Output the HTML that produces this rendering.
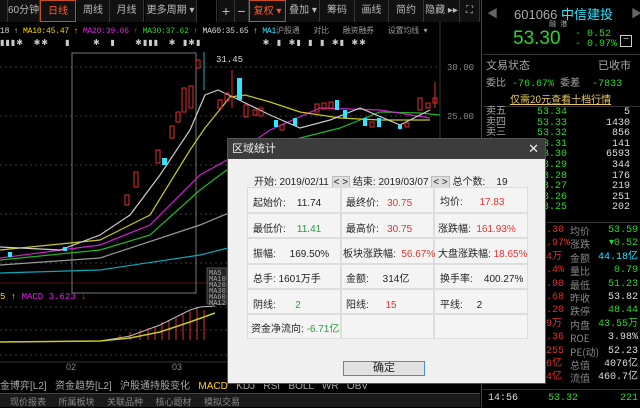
<!DOCTYPE html>
<html><head><meta charset="utf-8"><style>
*{margin:0;padding:0;box-sizing:border-box}
body{width:640px;height:407px;background:#000;overflow:hidden;position:relative;font-family:"Liberation Sans","Noto Sans CJK SC",sans-serif;font-size:11px;color:#ccc}
.a{position:absolute;white-space:nowrap}
.tb{position:absolute;top:0;height:22px;border-right:1px solid #333;background:#111;color:#bbb;font-size:10px;line-height:22px;text-align:center;overflow:hidden;white-space:nowrap}
.rp .a{font-family:"Liberation Mono","Noto Sans CJK SC",monospace;font-size:11px}
.g{color:#2fd52f}.r{color:#ff3b3b}.w{color:#ddd}.y{color:#ffd700}.c{color:#2ee6ff}
.dlg{position:absolute;left:227px;top:138px;width:319px;height:246px;background:#f0f0f0;border:1px solid #555}
.dt{height:20px;background:#3c3c3c;color:#eee;font-size:11px;line-height:20px;padding-left:4px;position:relative}
.dlg .a{color:#222;font-size:10px}
.cell{position:absolute;border:1px solid #ddd;background:#f4f4f4}
.rd{color:#e03535!important}.gn{color:#2a9a3a!important}
.btn{position:absolute;background:#e1e1e1;border:1px solid #9ab;font-size:11px;color:#222;text-align:center}
</style></head><body>
<div class="tb" style="left:0;width:8px"></div>
<div class="tb" style="left:8px;width:32px">60分钟</div>
<div class="tb" style="left:40px;width:36px;color:#ff5a2a;border:1px solid #c8501e">日线</div>
<div class="tb" style="left:77px;width:33px">周线</div>
<div class="tb" style="left:110px;width:34px">月线</div>
<div class="tb" style="left:145px;width:52px">更多周期 ▾</div>
<div class="tb" style="left:197px;width:20px;background:#000"></div>
<div class="tb" style="left:218px;width:17px;font-size:14px">+</div>
<div class="tb" style="left:235px;width:14px;font-size:14px">−</div>
<div class="tb" style="left:249px;width:37px;color:#ff5a2a;border:1px solid #c8501e">复权 ▾</div>
<div class="tb" style="left:287px;width:33px">叠加 ▾</div>
<div class="tb" style="left:320px;width:35px">筹码</div>
<div class="tb" style="left:355px;width:34px">画线</div>
<div class="tb" style="left:389px;width:35px">简约</div>
<div class="tb" style="left:424px;width:36px">隐藏 ▸▸</div>
<div class="tb" style="left:460px;width:20px">⛶</div>
<div class="a" style="left:0;top:25px;font-size:8px;font-family:'Liberation Mono','Noto Sans CJK SC',monospace;letter-spacing:-0.2px">
<span class="w">18 ↑</span> <span class="y">MA10:45.47 ↑</span> <span style="color:#e020e0">MA20:39.06 ↑</span> <span class="g">MA30:37.62 ↑</span> <span class="w">MA60:35.65 ↑</span> <span class="c">MA1</span><span style="color:#999">沪股通 &nbsp; 对比 &nbsp; 融资融券 &nbsp; 设置均线 ▾</span></div>
<div class="a" style="left:0;top:38px;font-size:8px;color:#ccc;letter-spacing:1px">▮▮▮✱ &nbsp; ✱✱ &nbsp; &nbsp; ▮ &nbsp; &nbsp; &nbsp; ✱ &nbsp; ▮ &nbsp; &nbsp; &nbsp;✱▮▮▮ &nbsp; ✱ &nbsp;▮✱▮ &nbsp; &nbsp; &nbsp; &nbsp; &nbsp; &nbsp; &nbsp; &nbsp; &nbsp; ✱ &nbsp;▮ &nbsp;✱▮ &nbsp;▮ &nbsp;▮ &nbsp;✱▮ &nbsp;✱✱</div>
<svg class="a" style="left:0;top:0" width="480" height="407">
<g stroke="#3a3a3a" stroke-dasharray="2,3">
<line x1="0" y1="67" x2="440" y2="67"/><line x1="0" y1="116" x2="440" y2="116"/><line x1="0" y1="165" x2="440" y2="165"/><line x1="0" y1="214" x2="440" y2="214"/><line x1="0" y1="263" x2="440" y2="263"/>
<line x1="0" y1="307" x2="440" y2="307"/><line x1="0" y1="330" x2="440" y2="330"/><line x1="0" y1="355" x2="440" y2="355"/></g>
<line x1="440" y1="22" x2="440" y2="372" stroke="#333"/>
<line x1="0" y1="283" x2="480" y2="283" stroke="#5a1010"/>
<line x1="0" y1="362" x2="480" y2="362" stroke="#333"/>
<rect x="72" y="53" width="124" height="240" fill="none" stroke="#777"/>
<text x="447" y="70" fill="#888" font-size="9" font-family="Liberation Mono">30.00</text>
<text x="447" y="119" fill="#888" font-size="9" font-family="Liberation Mono">25.00</text>
<text x="216" y="62" fill="#ddd" font-size="9" font-family="Liberation Mono">31.45</text>
<text x="66" y="370" fill="#888" font-size="9">02</text><text x="172" y="370" fill="#888" font-size="9">03</text>
<g fill="none" stroke-width="1.2">
<polyline stroke="#0aa8b8" points="0,273 100,270 200,255 300,230 440,205"/>
<polyline stroke="#999" points="0,265 100,258 200,225 260,200 330,170 440,150"/>
<polyline stroke="#22b822" points="0,260 100,250 150,235 200,190 240,160 300,138 340,128 380,112 420,113 440,115"/>
<polyline stroke="#d020d0" points="0,258 100,245 150,225 200,175 227,160 270,130 320,108 380,110 430,118"/>
<polyline stroke="#c8c820" points="0,250 100,240 150,215 190,150 205,128 230,97 245,95 270,102 300,112 340,118 380,120 430,120"/>
<polyline stroke="#ccc" points="0,247 60,250 100,235 130,215 160,175 190,130 205,95 218,90 235,98 270,115 300,128 330,120 360,108 400,125 430,110"/>
</g>
<g stroke="#e03030" fill="none">
<rect x="125" y="195" width="4" height="10"/><rect x="134" y="172" width="4" height="15"/><rect x="156" y="150" width="4" height="13"/><rect x="170" y="126" width="4" height="12"/><rect x="176" y="112" width="4" height="10"/><rect x="182" y="88" width="4" height="24"/><rect x="189" y="86" width="4" height="22"/><rect x="196" y="60" width="4" height="8"/>
<rect x="218" y="100" width="4" height="8"/><rect x="225" y="93" width="4" height="8"/><rect x="244" y="105" width="4" height="12"/><rect x="253" y="110" width="4" height="5"/><rect x="259" y="108" width="4" height="8"/><rect x="280" y="125" width="4" height="5"/><rect x="315" y="104" width="4" height="8"/><rect x="322" y="103" width="4" height="6"/><rect x="329" y="102" width="4" height="6"/><rect x="370" y="122" width="4" height="5"/><rect x="405" y="123" width="4" height="4"/><rect x="418" y="98" width="4" height="12"/><rect x="426" y="103" width="4" height="5"/><rect x="433" y="98" width="4" height="5"/>
<line x1="232" y1="70" x2="232" y2="108"/><line x1="435" y1="82" x2="435" y2="108"/></g>
<g fill="#2ee6ff"><rect x="237" y="78" width="5" height="22"/><rect x="162" y="158" width="5" height="7"/><rect x="274" y="120" width="4" height="7"/><rect x="293" y="118" width="4" height="8"/><rect x="335" y="100" width="4" height="10"/><rect x="343" y="110" width="4" height="8"/><rect x="363" y="118" width="4" height="8"/><rect x="377" y="118" width="4" height="9"/><rect x="398" y="125" width="4" height="4"/><rect x="8" y="252" width="4" height="5"/><rect x="63" y="247" width="4" height="4"/></g>
<line x1="204" y1="52" x2="204" y2="90" stroke="#2ab"/>
<g stroke="#e03030"><line x1="120" y1="335" x2="120" y2="340"/><line x1="130" y1="332" x2="130" y2="340"/><line x1="140" y1="330" x2="140" y2="340"/><line x1="148" y1="328" x2="148" y2="340"/><line x1="155" y1="326" x2="155" y2="340"/><line x1="162" y1="322" x2="162" y2="340"/><line x1="169" y1="320" x2="169" y2="340"/><line x1="176" y1="318" x2="176" y2="340"/><line x1="183" y1="314" x2="183" y2="340"/><line x1="190" y1="311" x2="190" y2="340"/><line x1="197" y1="307" x2="197" y2="340"/><line x1="204" y1="310" x2="204" y2="340"/></g>
<polyline fill="none" stroke="#bbb" points="0,342 100,341 130,336 160,325 190,310 200,307 215,306"/>
<polyline fill="none" stroke="#c8c820" stroke-width="1.5" points="0,342 100,341 130,338 160,332 190,322 215,313"/>
<rect x="207" y="268" width="20" height="36" fill="#222" stroke="#555"/>
</svg>
<div class="a" style="left:209px;top:271px;font-size:7px;color:#aaa;line-height:6px;font-family:'Liberation Mono'">MA5<br>MA10<br>MA20<br>MA30<br>MA60<br>MA12</div>
<div class="a" style="left:0;top:292px;font-size:9px;font-family:'Liberation Mono'"><span class="y">5 ↑</span> <span style="color:#e020e0">MACD 3.623 ↓</span></div>
<div class="a" style="left:0;top:377px;font-size:10px;color:#aaa">金博弈[L2] &nbsp; 资金趋势[L2] &nbsp; 沪股通持股变化 &nbsp; <span class="y">MACD</span> &nbsp; KDJ &nbsp; RSI &nbsp; BOLL &nbsp; WR &nbsp; OBV</div>
<div class="a" style="left:0;top:393px;width:480px;height:14px;background:#1a1a1a;border-top:1px solid #444"></div>
<div class="a" style="left:10px;top:395px;font-size:9px;color:#888">现价报表 &nbsp; &nbsp; 所属板块 &nbsp; &nbsp; 关联品种 &nbsp; &nbsp; 核心题材 &nbsp; &nbsp; 模拟交易</div>
<div class="rp">
<div class="a" style="left:481px;top:0;width:1px;height:407px;background:#444"></div>
<div class="a" style="left:487px;top:5px;color:#666">◀</div><div class="a" style="left:631px;top:5px;color:#666">▶</div>
<div class="a" style="left:514px;top:4px;font-size:13px;color:#aaa;font-family:'Liberation Sans','Noto Sans CJK SC',sans-serif">601066 <span class="c">中信建投</span></div>
<div class="a" style="left:549px;top:19px;font-size:7px;color:#aaa">融 港</div>
<div class="a" style="left:513px;top:28px;font-size:19px;font-family:'Liberation Sans'" ><span class="g">53.30</span></div>
<div class="a g" style="left:575px;top:30px;line-height:10px;font-size:10px">- 0.52<br>- 0.97%</div>
<div class="a" style="left:620px;top:35px;width:12px;height:12px;border:1px solid #ccc;color:#ccc;font-size:10px;line-height:9px;text-align:center">−</div>
<div class="a" style="left:483px;top:54px;width:157px;height:1px;background:#333"></div>
<div class="a" style="left:486px;top:57px;color:#aaa;font-family:'Noto Sans CJK SC'">文易状态</div><div class="a" style="left:598px;top:57px;color:#aaa;font-family:'Noto Sans CJK SC'">已收市</div>
<div class="a" style="left:486px;top:74px;color:#aaa;font-size:10px"><span style="font-family:'Noto Sans CJK SC'">委比</span> <span class="g">-76.67%</span> <span style="font-family:'Noto Sans CJK SC'">委差</span> &nbsp;<span class="g">-7833</span></div>
<div class="a" style="left:510px;top:91px;color:#e8c860;text-decoration:underline;font-family:'Noto Sans CJK SC';font-size:10px">仅需20元查看十档行情</div>
<div class="a" style="left:483px;top:106px;width:157px;height:1px;background:#333"></div>
<div class="a" style="left:486px;top:108px;color:#aaa;line-height:10.6px;font-size:10px">卖五<br>卖四<br>卖三<br>卖二<br>卖一<br>买一<br>买二<br>买三<br>买四<br>买五</div>
<div class="a g" style="left:537px;top:108px;line-height:10.6px;font-size:10px">53.34<br>53.33<br>53.32<br>53.31<br>53.30<br>53.29<br>53.28<br>53.27<br>53.26<br>53.25</div>
<div class="a w" style="left:590px;top:108px;line-height:10.6px;font-size:10px;text-align:right;width:40px">5<br>1430<br>856<br>141<br>6593<br>344<br>176<br>219<br>251<br>202</div>
<div class="a" style="left:483px;top:222px;width:157px;height:1px;background:#333"></div>
<div class="a" style="left:546px;top:224px;line-height:13.4px;font-size:10px;color:#e03030">.30<br>.97%<br>4万<br>.4%<br>.90<br>.68<br>.20<br>9万<br>.36<br>255<br>6亿<br>4亿</div>
<div class="a" style="left:570px;top:224px;line-height:13.4px;font-size:10px;color:#888;font-family:'Noto Sans CJK SC'">均价<br>涨跌<br>金额<br>量比<br>最低<br>昨收<br>跌停<br>内盘<br>ROE<br>PE(动)<br>总值<br>流值</div>
<div class="a" style="left:595px;top:224px;width:43px;text-align:right;line-height:13.4px;font-size:10px"><span class="g">53.59</span><br><span class="g">▾0.52</span><br><span class="c">44.18亿</span><br><span class="g">0.79</span><br><span class="g">51.23</span><br><span class="w">53.82</span><br><span class="g">48.44</span><br><span class="g">43.55万</span><br><span class="w">3.98%</span><br><span class="w">52.23</span><br><span class="w">4076亿</span><br><span class="w">460.7亿</span></div>
<div class="a" style="left:483px;top:389px;width:157px;height:1px;background:#333"></div>
<div class="a w" style="left:488px;top:393px;font-size:10px">14:56</div><div class="a g" style="left:548px;top:393px;font-size:10px">53.32</div><div class="a g" style="left:620px;top:393px;font-size:10px">221</div>
</div>
<div class="dlg">
<div class="dt">区域统计<span style="position:absolute;right:6px;top:0;font-size:13px">✕</span></div>
<div class="a" style="left:26px;top:34px">开始: 2019/02/11 <span style="background:#ddd;border:1px solid #bbb;padding:0 1px">&lt; &gt;</span> 结束: 2019/03/07 <span style="background:#ddd;border:1px solid #bbb;padding:0 1px">&lt; &gt;</span> 总个数: &nbsp;&nbsp; 19</div>
</div>
<div style="position:absolute;left:247px;top:187px">
<div class="cell" style="left:0;top:0;width:94px;height:26px"></div><div class="cell" style="left:94px;top:0;width:93px;height:26px"></div><div class="cell" style="left:187px;top:0;width:94px;height:26px"></div>
<div class="cell" style="left:0;top:26px;width:94px;height:25px"></div><div class="cell" style="left:94px;top:26px;width:93px;height:25px"></div><div class="cell" style="left:187px;top:26px;width:94px;height:25px"></div>
<div class="cell" style="left:0;top:51px;width:94px;height:26px"></div><div class="cell" style="left:94px;top:51px;width:93px;height:26px"></div><div class="cell" style="left:187px;top:51px;width:94px;height:26px"></div>
<div class="cell" style="left:0;top:77px;width:94px;height:25px"></div><div class="cell" style="left:94px;top:77px;width:93px;height:25px"></div><div class="cell" style="left:187px;top:77px;width:94px;height:25px"></div>
<div class="cell" style="left:0;top:102px;width:94px;height:25px"></div><div class="cell" style="left:94px;top:102px;width:93px;height:25px"></div><div class="cell" style="left:187px;top:102px;width:94px;height:25px"></div>
<div class="cell" style="left:0;top:127px;width:94px;height:25px"></div><div class="cell" style="left:94px;top:127px;width:93px;height:25px"></div><div class="cell" style="left:187px;top:127px;width:94px;height:25px"></div>
</div>
<div style="position:absolute;left:0;top:0;font-size:10px;color:#222">
<div class="a" style="left:253px;top:194px">起始价: &nbsp; &nbsp;11.74</div>
<div class="a" style="left:346px;top:194px">最终价: &nbsp; <span class="rd">30.75</span></div>
<div class="a" style="left:440px;top:193px">均价: &nbsp; &nbsp; &nbsp;<span class="rd">17.83</span></div>
<div class="a" style="left:253px;top:220px">最低价: &nbsp; &nbsp;<span class="gn">11.41</span></div>
<div class="a" style="left:346px;top:220px">最高价: &nbsp; <span class="rd">30.75</span></div>
<div class="a" style="left:438px;top:220px">涨跌幅: &nbsp;<span class="rd">161.93%</span></div>
<div class="a" style="left:253px;top:245px">振幅: &nbsp; &nbsp; 169.50%</div>
<div class="a" style="left:343px;top:245px">板块涨跌幅: &nbsp;<span class="rd">56.67%</span></div>
<div class="a" style="left:438px;top:245px">大盘涨跌幅: <span class="rd">18.65%</span></div>
<div class="a" style="left:253px;top:270px">总手: 1601万手</div>
<div class="a" style="left:346px;top:270px">金额: &nbsp; &nbsp; 314亿</div>
<div class="a" style="left:440px;top:270px">换手率: &nbsp; &nbsp;400.27%</div>
<div class="a" style="left:253px;top:296px">阴线: &nbsp; &nbsp; &nbsp; <span class="gn">2</span></div>
<div class="a" style="left:346px;top:296px">阳线: &nbsp; &nbsp; &nbsp;<span class="rd">15</span></div>
<div class="a" style="left:440px;top:296px">平线: &nbsp; &nbsp; 2</div>
<div class="a" style="left:251px;top:320px">资金净流向: <span class="gn">-6.71亿</span></div>
</div>
<div class="btn" style="left:343px;top:361px;width:82px;height:15px;line-height:13px;border-color:#4a8ad0">确定</div>
</body></html>
